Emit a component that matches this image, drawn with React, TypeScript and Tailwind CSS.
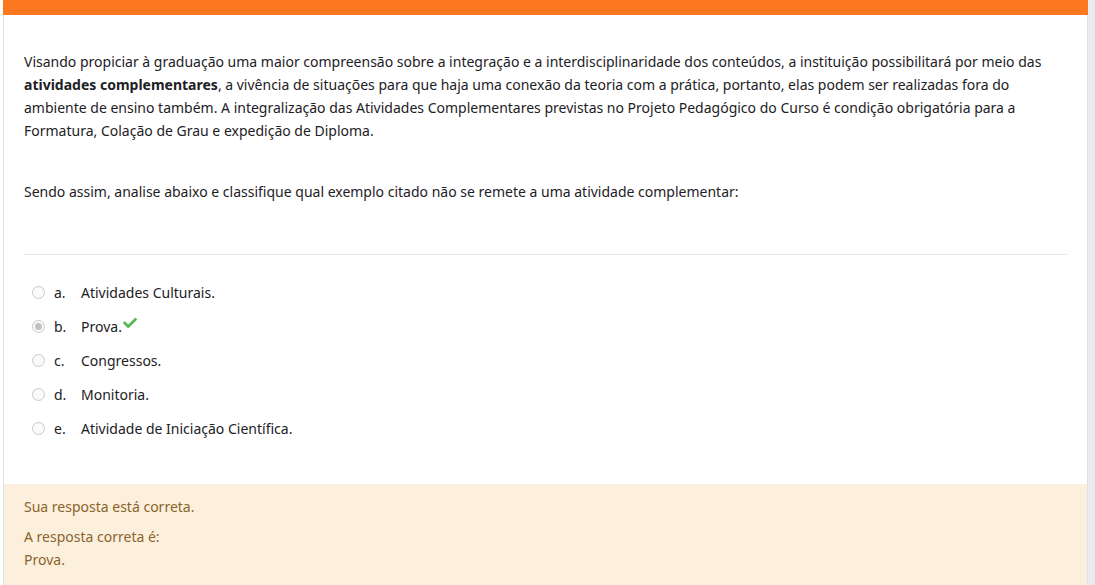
import { FaCheck } from "react-icons/fa";

const options = [
  { l: "a.", t: "Atividades Culturais.", checked: false },
  { l: "b.", t: "Prova.", checked: true },
  { l: "c.", t: "Congressos.", checked: false },
  { l: "d.", t: "Monitoria.", checked: false },
  { l: "e.", t: "Atividade de Iniciação Científica.", checked: false },
];

export default function App() {
  return (
    <div className="flex h-[585px] w-[1095px] overflow-hidden bg-white font-['Noto_Sans',sans-serif] text-[14px] leading-[23px] text-[#1d2125]">
      <div className="w-[3px] shrink-0 bg-white" />
      <div className="flex w-[1085px] shrink-0 flex-col">
        <div className="h-[15px] shrink-0 bg-[#fd7620]" />
        <div className="flex flex-1 flex-col border-x border-[#dee2e6]">
          <div className="px-[20px] pt-[35px]">
            <p>
              Visando propiciar à graduação uma maior compreensão sobre a integração e a interdisciplinaridade dos conteúdos, a instituição possibilitará por meio das{" "}
              <strong className="font-bold">atividades complementares</strong>, a vivência de situações para que haja uma conexão da teoria com a prática, portanto, elas podem ser realizadas fora do ambiente de ensino também. A integralização das Atividades Complementares previstas no Projeto Pedagógico do Curso é condição obrigatória para a Formatura, Colação de Grau e expedição de Diploma.
            </p>
            <p className="mt-[38px]">
              Sendo assim, analise abaixo e classifique qual exemplo citado não se remete a uma atividade complementar:
            </p>
            <div className="mt-[51px] h-px bg-[#e8e8e8]" />
            <div className="mt-[20px] flex flex-col">
              {options.map((o) => (
                <div key={o.l} className="flex h-[34px] items-center">
                  <span className="ml-[8px] flex h-[13px] w-[13px] items-center justify-center rounded-full border border-[#c9c9c9] bg-[#fafafa]">
                    {o.checked && <span className="h-[7px] w-[7px] rounded-full bg-[#c2c2c2]" />}
                  </span>
                  <span className="ml-[9px] w-[27px]">{o.l}</span>
                  <span>{o.t}</span>
                  {o.checked && <FaCheck className="ml-[1px] mb-[6px] text-[#5cb85c]" size={14} />}
                </div>
              ))}
            </div>
          </div>
          <div className="mt-[39px] flex-1 bg-[#fcefdc] px-[20px] pt-[11px] text-[#8a642e]">
            <div>Sua resposta está correta.</div>
            <div className="mt-[7px]">A resposta correta é:</div>
            <div>Prova.</div>
          </div>
        </div>
      </div>
      <div className="flex-1 bg-[#e9ecef]" />
    </div>
  );
}
